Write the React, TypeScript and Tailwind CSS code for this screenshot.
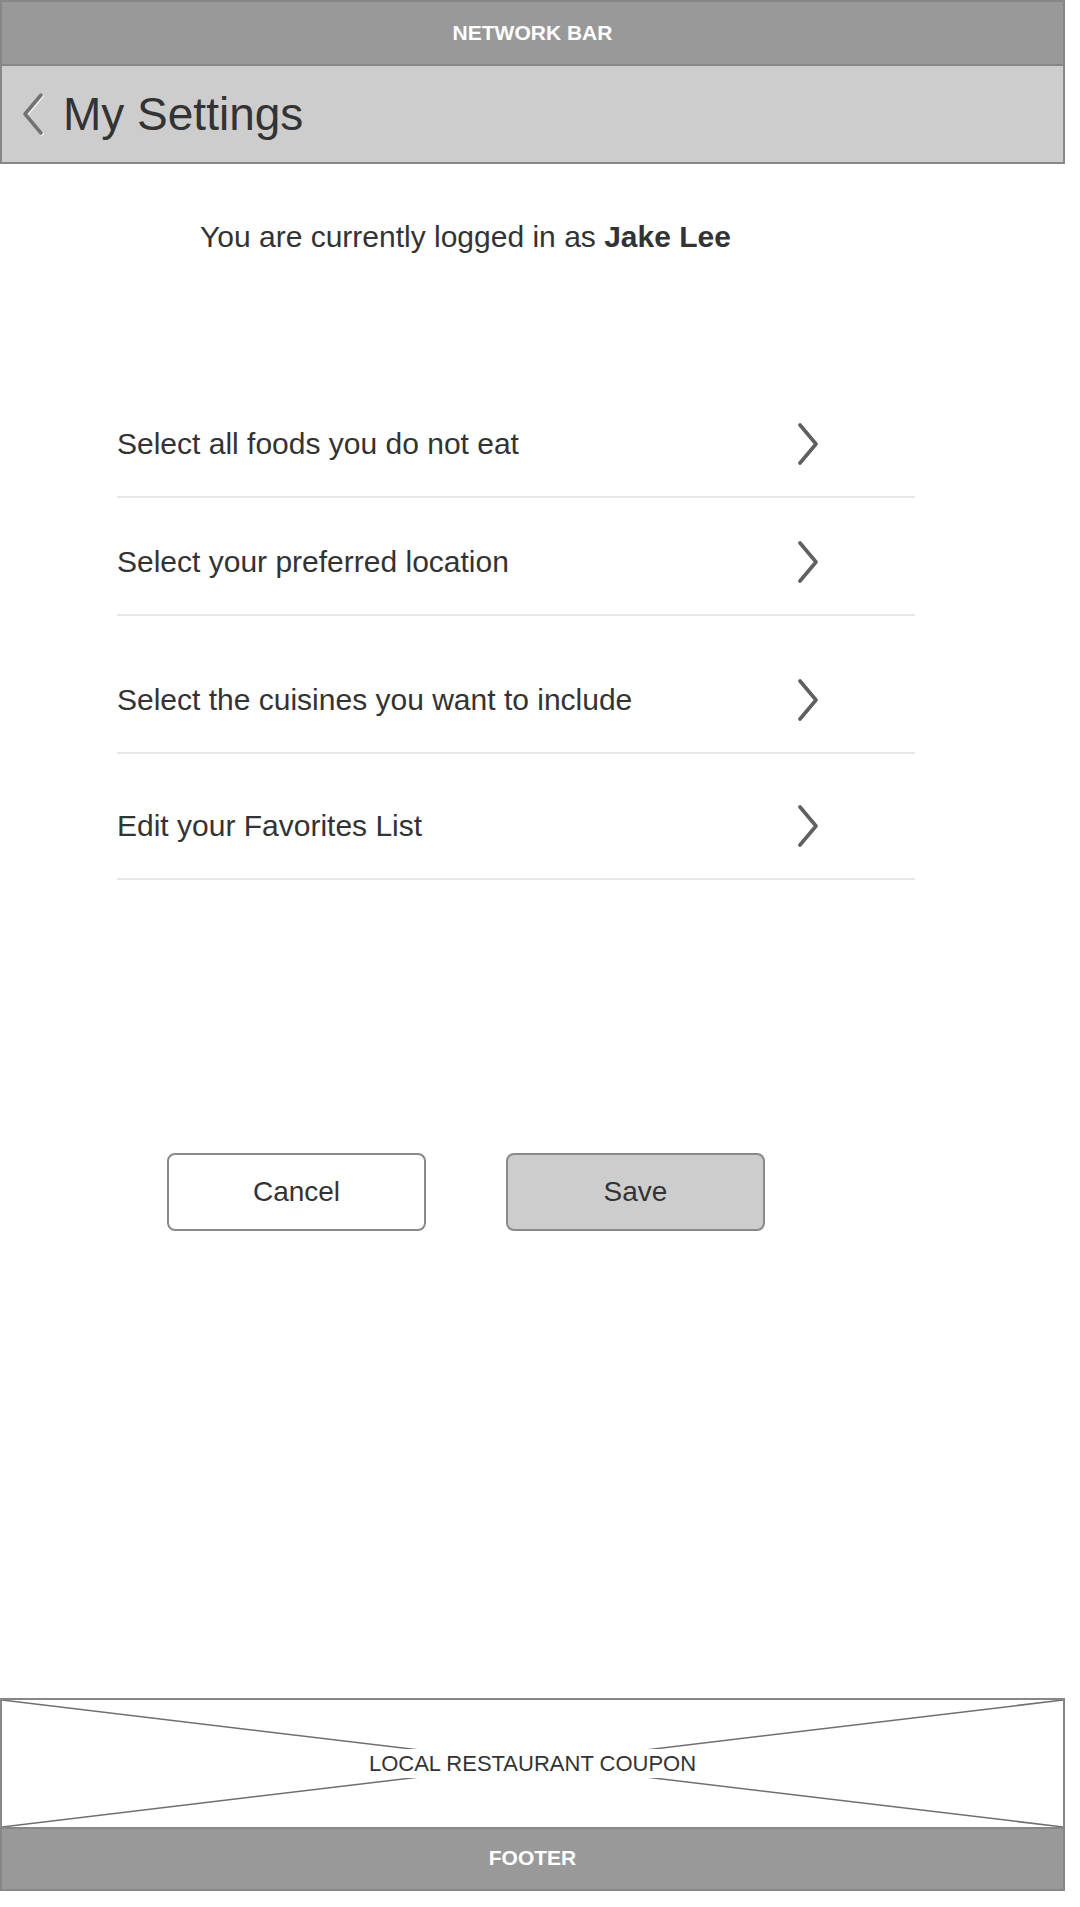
import { ReactNode } from 'react'

const settingsRows = [
    { label: 'Select all foods you do not eat', pad: 'pt-0' },
    { label: 'Select your preferred location', pad: 'pt-[44px]' },
    { label: 'Select the cuisines you want to include', pad: 'pt-[64px]' },
    { label: 'Edit your Favorites List', pad: 'pt-[52px]' },
]

const ChevronRight = () => (
    <svg width="22" height="42" viewBox="0 0 22 42" className="shrink-0">
        <polyline
            points="3,2 19,21 3,40"
            fill="none"
            stroke="#606060"
            strokeWidth="3.6"
            strokeLinecap="round"
            strokeLinejoin="round"
        />
    </svg>
)

const BackChevron = () => (
    <svg width="24" height="44" viewBox="0 0 24 44" className="shrink-0">
        <polyline
            points="21,4 5,23 21,42"
            fill="none"
            stroke="#f4f4f4"
            strokeWidth="3.5"
            strokeLinecap="round"
            strokeLinejoin="round"
        />
        <polyline
            points="20,3 4,22 20,41"
            fill="none"
            stroke="#727272"
            strokeWidth="3.5"
            strokeLinecap="round"
            strokeLinejoin="round"
        />
    </svg>
)

const SettingsRow = ({ children, pad }: { children: ReactNode; pad: string }) => (
    <div className={`${pad} border-b-2 border-[#e8e8e8] pb-[32px]`}>
        <div className="flex h-[40px] items-center justify-between pr-[96px]">
            <span className="text-[30px] leading-[40px] text-[#333333]">{children}</span>
            <ChevronRight />
        </div>
    </div>
)

const App = () => {
    return (
        <div className="min-h-[1907px] w-[1080px] bg-white font-['Liberation_Sans',Arial,sans-serif]">
            <div className="flex h-[1891px] w-[1065px] flex-col">
                {/* network bar */}
                <div className="flex h-[66px] shrink-0 items-center justify-center border-2 border-[#878787] bg-[#999999]">
                    <span className="text-[21px] font-bold text-white">NETWORK BAR</span>
                </div>

                {/* header */}
                <div className="flex h-[98px] shrink-0 items-center border-x-2 border-b-2 border-[#878787] bg-[#cdcdcd] pl-[19px]">
                    <BackChevron />
                    <span className="ml-[18px] text-[46px] leading-none text-[#333333]">My Settings</span>
                </div>

                {/* content */}
                <div className="flex flex-1 flex-col pt-[53px]">
                    <p className="pl-[200px] text-[30px] leading-[40px] text-[#333333]">
                        You are currently logged in as <span className="font-bold">Jake Lee</span>
                    </p>

                    <div className="ml-[117px] mt-[167px] w-[798px]">
                        {settingsRows.map((row) => (
                            <SettingsRow key={row.label} pad={row.pad}>
                                {row.label}
                            </SettingsRow>
                        ))}
                    </div>

                    <div className="ml-[167px] mt-[273px] flex gap-[80px]">
                        <button className="h-[78px] w-[259px] rounded-[8px] border-2 border-[#8a8a8a] bg-white text-[28px] text-[#333333]">
                            Cancel
                        </button>
                        <button className="h-[78px] w-[259px] rounded-[8px] border-2 border-[#8a8a8a] bg-[#cdcdcd] text-[28px] text-[#333333]">
                            Save
                        </button>
                    </div>
                </div>

                {/* coupon placeholder */}
                <div className="relative flex h-[131px] shrink-0 items-center justify-center border-2 border-[#878787] bg-white">
                    <svg
                        className="absolute inset-0 h-full w-full"
                        viewBox="0 0 100 100"
                        preserveAspectRatio="none"
                    >
                        <line x1="0" y1="0" x2="100" y2="100" stroke="#6f6f6f" strokeWidth="1.5" vectorEffect="non-scaling-stroke" />
                        <line x1="0" y1="100" x2="100" y2="0" stroke="#6f6f6f" strokeWidth="1.5" vectorEffect="non-scaling-stroke" />
                    </svg>
                    <span className="relative bg-white text-[22px] leading-[29px] text-[#333333]">
                        LOCAL RESTAURANT COUPON
                    </span>
                </div>

                {/* footer */}
                <div className="flex h-[62px] shrink-0 items-center justify-center border-x-2 border-b-2 border-[#878787] bg-[#999999] pb-[3px]">
                    <span className="text-[21px] font-bold text-white">FOOTER</span>
                </div>
            </div>
        </div>
    )
}

export default App
